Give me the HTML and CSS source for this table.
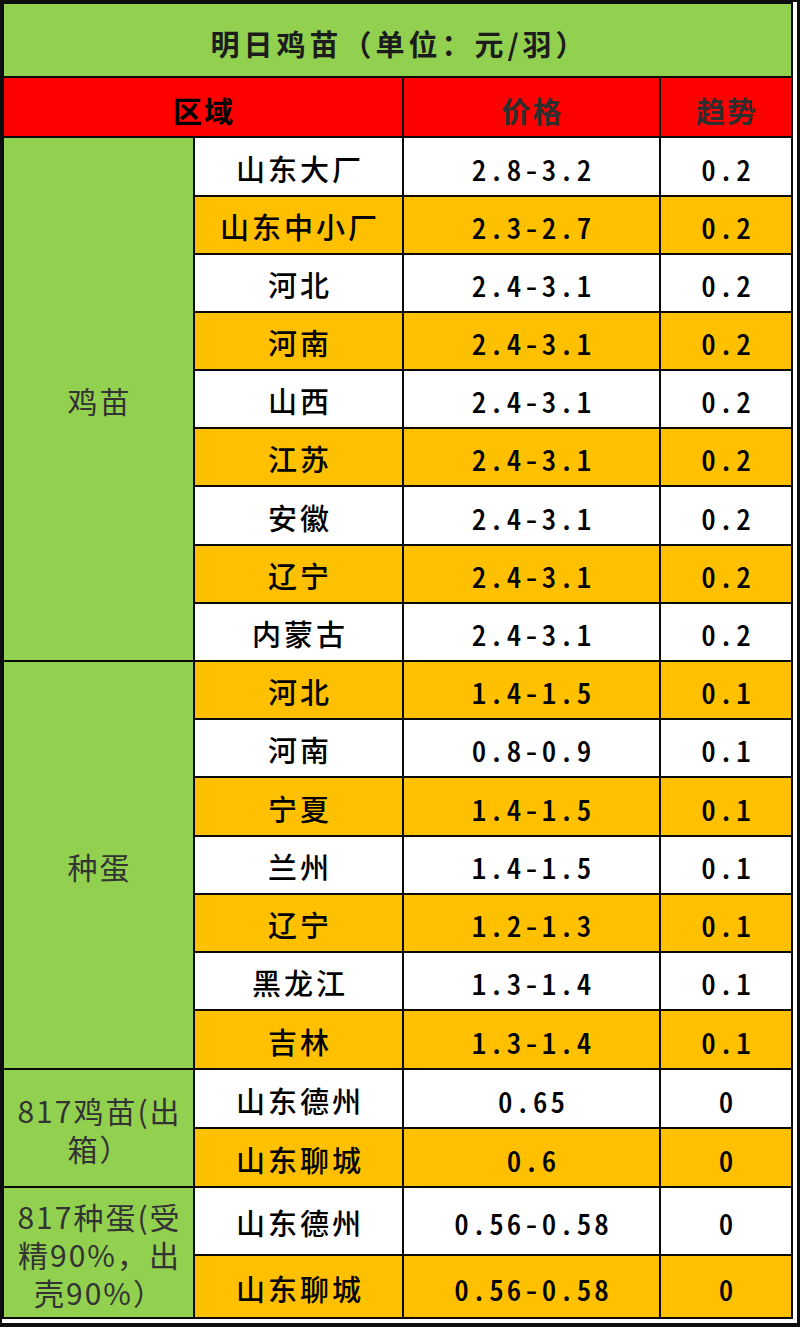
FILE: index.html
```html
<!DOCTYPE html>
<html lang="zh-CN">
<head>
<meta charset="utf-8">
<title>明日鸡苗</title>
<link rel="stylesheet" href="styles.css">
</head>
<body>
<div class="page">
  <div class="sheet">
    <div class="grid">
      <div class="cell title">明日鸡苗（单位：元/羽）</div>
      <div class="cell head region">区域</div>
      <div class="cell head">价格</div>
      <div class="cell head">趋势</div>

      <div class="cell group g-chick">鸡苗</div>
      <div class="row"><div class="cell data">山东大厂</div><div class="cell data">2.8-3.2</div><div class="cell data">0.2</div></div>
      <div class="row alt"><div class="cell data">山东中小厂</div><div class="cell data">2.3-2.7</div><div class="cell data">0.2</div></div>
      <div class="row"><div class="cell data">河北</div><div class="cell data">2.4-3.1</div><div class="cell data">0.2</div></div>
      <div class="row alt"><div class="cell data">河南</div><div class="cell data">2.4-3.1</div><div class="cell data">0.2</div></div>
      <div class="row"><div class="cell data">山西</div><div class="cell data">2.4-3.1</div><div class="cell data">0.2</div></div>
      <div class="row alt"><div class="cell data">江苏</div><div class="cell data">2.4-3.1</div><div class="cell data">0.2</div></div>
      <div class="row"><div class="cell data">安徽</div><div class="cell data">2.4-3.1</div><div class="cell data">0.2</div></div>
      <div class="row alt"><div class="cell data">辽宁</div><div class="cell data">2.4-3.1</div><div class="cell data">0.2</div></div>
      <div class="row"><div class="cell data">内蒙古</div><div class="cell data">2.4-3.1</div><div class="cell data">0.2</div></div>

      <div class="cell group g-egg">种蛋</div>
      <div class="row alt"><div class="cell data">河北</div><div class="cell data">1.4-1.5</div><div class="cell data">0.1</div></div>
      <div class="row"><div class="cell data">河南</div><div class="cell data">0.8-0.9</div><div class="cell data">0.1</div></div>
      <div class="row alt"><div class="cell data">宁夏</div><div class="cell data">1.4-1.5</div><div class="cell data">0.1</div></div>
      <div class="row"><div class="cell data">兰州</div><div class="cell data">1.4-1.5</div><div class="cell data">0.1</div></div>
      <div class="row alt"><div class="cell data">辽宁</div><div class="cell data">1.2-1.3</div><div class="cell data">0.1</div></div>
      <div class="row"><div class="cell data">黑龙江</div><div class="cell data">1.3-1.4</div><div class="cell data">0.1</div></div>
      <div class="row alt"><div class="cell data">吉林</div><div class="cell data">1.3-1.4</div><div class="cell data">0.1</div></div>

      <div class="cell group g-817chick"><span class="ln">817鸡苗(出</span><span class="ln">箱）</span></div>
      <div class="row"><div class="cell data">山东德州</div><div class="cell data">0.65</div><div class="cell data">0</div></div>
      <div class="row alt"><div class="cell data">山东聊城</div><div class="cell data">0.6</div><div class="cell data">0</div></div>

      <div class="cell group g-817egg"><span class="ln">817种蛋(受</span><span class="ln">精90%，出</span><span class="ln">壳90%）</span></div>
      <div class="row"><div class="cell data">山东德州</div><div class="cell data">0.56-0.58</div><div class="cell data">0</div></div>
      <div class="row alt"><div class="cell data">山东聊城</div><div class="cell data">0.56-0.58</div><div class="cell data">0</div></div>
    </div>
  </div>
</div>
</body>
</html>
```

FILE: styles.css
```css
html, body {
  margin: 0;
  padding: 0;
  background: #0e0e0e;
}

.page {
  width: 800px;
  height: 1327px;
  padding: 2px 0 0 2px;
  box-sizing: border-box;
}

.sheet {
  display: inline-block;
  background: #ffffff;
  padding: 0 4px 4px 0;
}

.grid {
  display: grid;
  grid-template-columns: 189px 207px 255px 130px;
  grid-template-rows:
    72px 58px
    57px 56px 56px 56px 56px 56px 57px 56px 56px
    56px 56px 57px 56px 56px 56px 57px
    57px 57px 66px 61px;
  gap: 2px;
  background: #0a0a0a;
  border: 2px solid #0a0a0a;
  font-family: "Noto Sans CJK SC", "Noto Sans", sans-serif;
}

.row {
  display: contents;
}

.cell {
  display: flex;
  align-items: center;
  justify-content: center;
  background: #ffffff;
  box-sizing: border-box;
}

.title {
  grid-column: 1 / 5;
  background: #92d050;
  color: #1c1c1c;
  font-size: 29px;
  font-weight: 700;
  letter-spacing: 4px;
  padding: 5px 0 0 4px;
}

.head {
  background: #ff0000;
  color: #2e2e2e;
  font-size: 29px;
  font-weight: 700;
  letter-spacing: 2px;
  padding: 5px 0 0 2px;
}

.head.region {
  grid-column: 1 / 3;
  color: #000000;
}

.group {
  grid-column: 1;
  flex-direction: column;
  background: #92d050;
  color: #333333;
  font-size: 30px;
  font-weight: 400;
  letter-spacing: 2px;
  line-height: 38px;
  text-align: center;
  padding: 0 0 0 2px;
}

.group .ln {
  display: block;
  height: 38px;
  line-height: 38px;
}

.g-chick { grid-row: span 9; padding-top: 2px; }
.g-egg { grid-row: span 7; padding-top: 2px; }
.g-817chick { grid-row: span 2; padding-top: 2px; }
.g-817egg { grid-row: span 2; padding-top: 2px; }

.data {
  color: #000000;
  font-size: 29px;
  font-weight: 500;
  letter-spacing: 3px;
  font-feature-settings: "hwid" 1;
  padding: 2px 0 0 3px;
}

.row.alt > .cell {
  background: #ffc000;
}
```
